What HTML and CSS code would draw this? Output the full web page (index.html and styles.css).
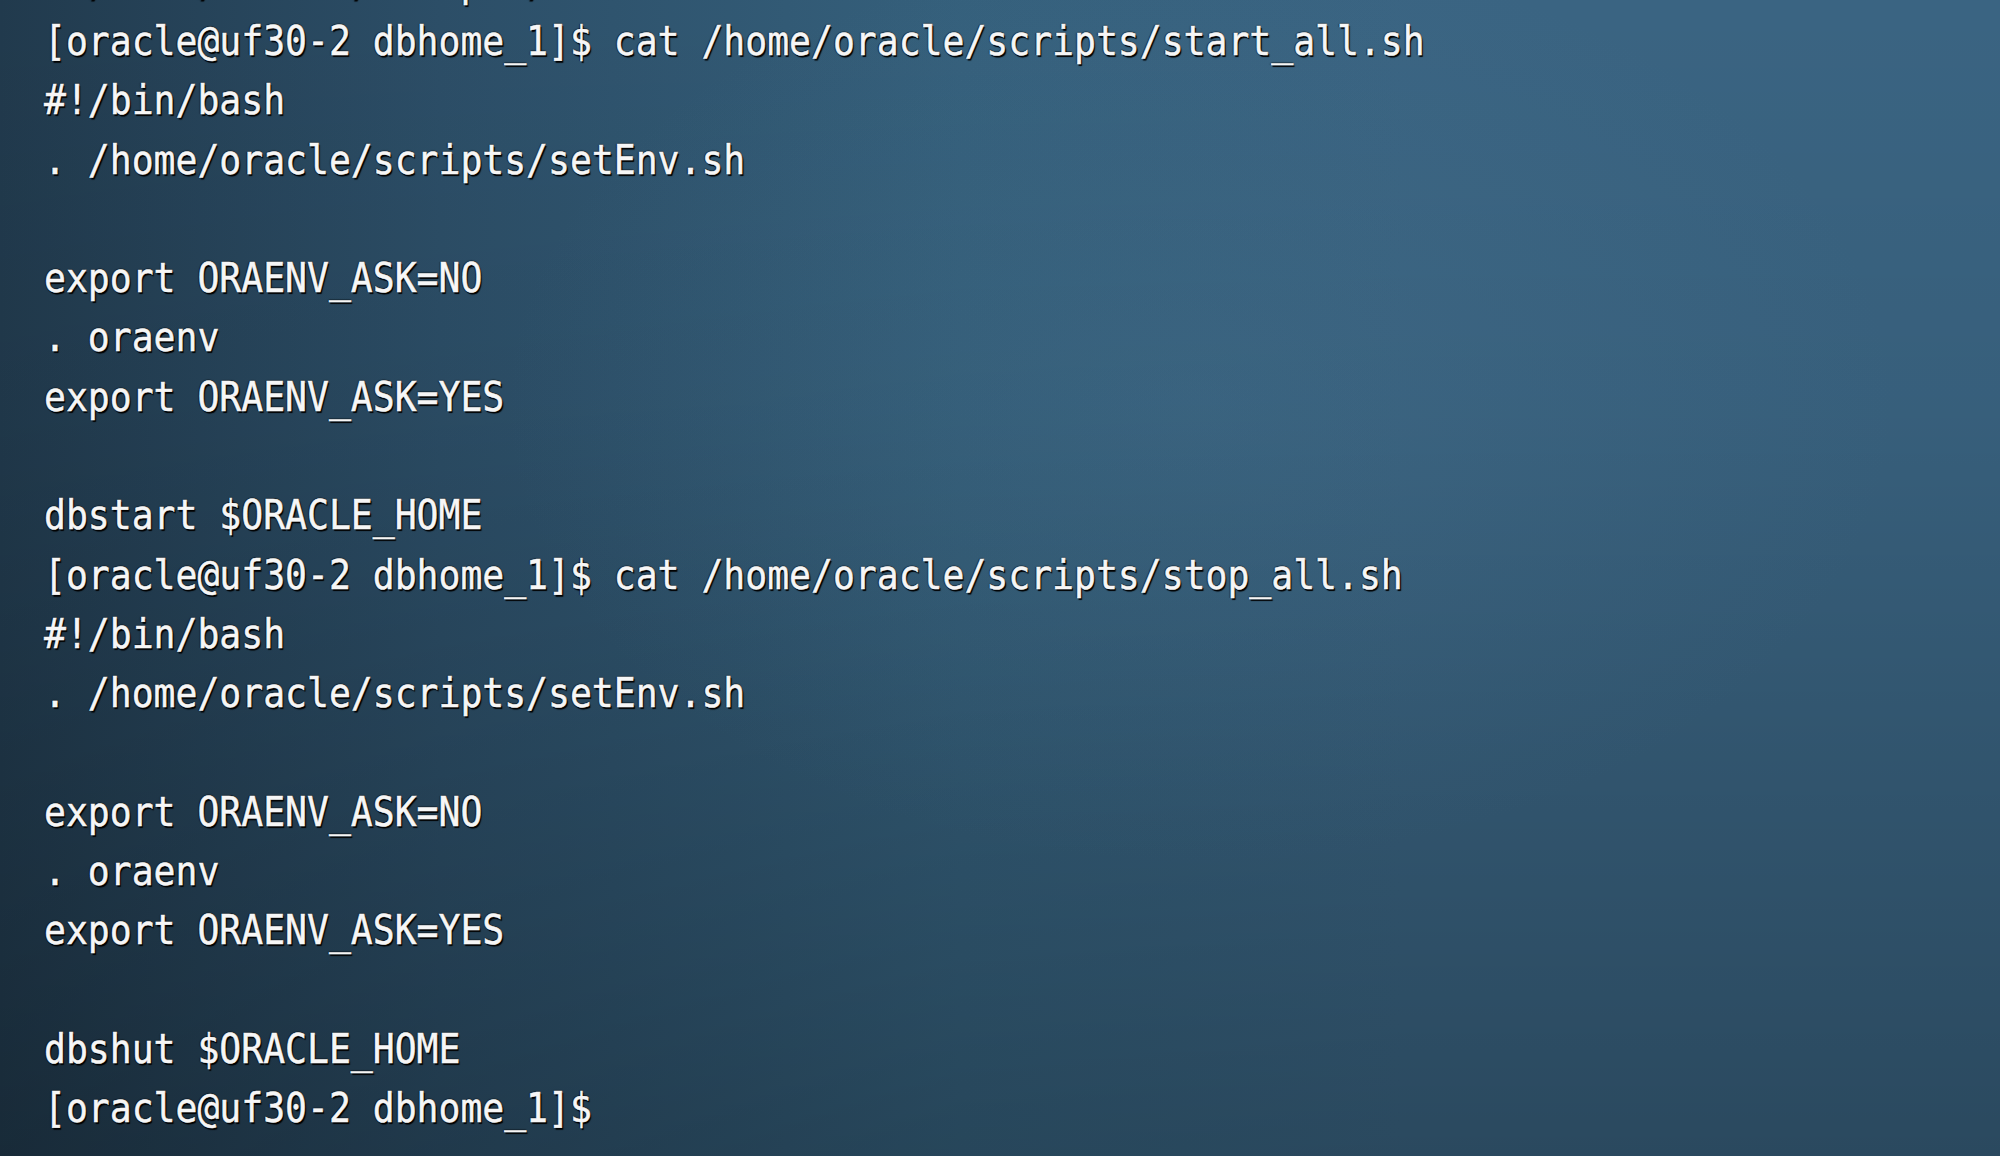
FILE: index.html
```html
<!DOCTYPE html>
<html lang="en">
<head>
<meta charset="utf-8">
<title>Terminal</title>
<link rel="stylesheet" href="styles.css">
</head>
<body>
<main class="terminal">
<pre class="output"><span class="cut">. /home/oracle/scripts/setEnv.sh</span>
[oracle@uf30-2 dbhome_1]$ cat /home/oracle/scripts/start_all.sh
#!/bin/bash
. /home/oracle/scripts/setEnv.sh

export ORAENV_ASK=NO
. oraenv
export ORAENV_ASK=YES

dbstart $ORACLE_HOME
[oracle@uf30-2 dbhome_1]$ cat /home/oracle/scripts/stop_all.sh
#!/bin/bash
. /home/oracle/scripts/setEnv.sh

export ORAENV_ASK=NO
. oraenv
export ORAENV_ASK=YES

dbshut $ORACLE_HOME
[oracle@uf30-2 dbhome_1]$</pre>
</main>
</body>
</html>
```

FILE: styles.css
```css
html, body {
  margin: 0;
  padding: 0;
  width: 100%;
  height: 100%;
  overflow: hidden;
}

body {
  background:
    radial-gradient(ellipse 35% 40% at 60% 35%, rgba(80, 125, 155, 0.18), rgba(80, 125, 155, 0) 100%),
    linear-gradient(to bottom, rgba(0, 0, 0, 0) 0%, rgba(0, 0, 0, 0.05) 35%, rgba(0, 0, 0, 0.27) 100%),
    linear-gradient(to right, #213a4d 0%, #2c4e67 22%, #35607c 48%, #3a6482 70%, #3a6482 100%);
}

.terminal {
  padding: 12px 0 0 44px;
}

.output {
  margin: -59.3px 0 0 0;
  font-family: "DejaVu Sans Mono", "Liberation Mono", monospace;
  font-size: 40px;
  line-height: 59.3px;
  color: #f6f6f6;
  -webkit-text-stroke: 0.5px #f6f6f6;
  text-shadow: 1.5px 1.5px 1px #000, -1px 0 1px rgba(0, 0, 0, 0.7), 0 -1px 1px rgba(0, 0, 0, 0.5);
  transform: scaleX(0.91);
  transform-origin: left top;
  white-space: pre;
}

.cut {
  display: inline;
}
```
